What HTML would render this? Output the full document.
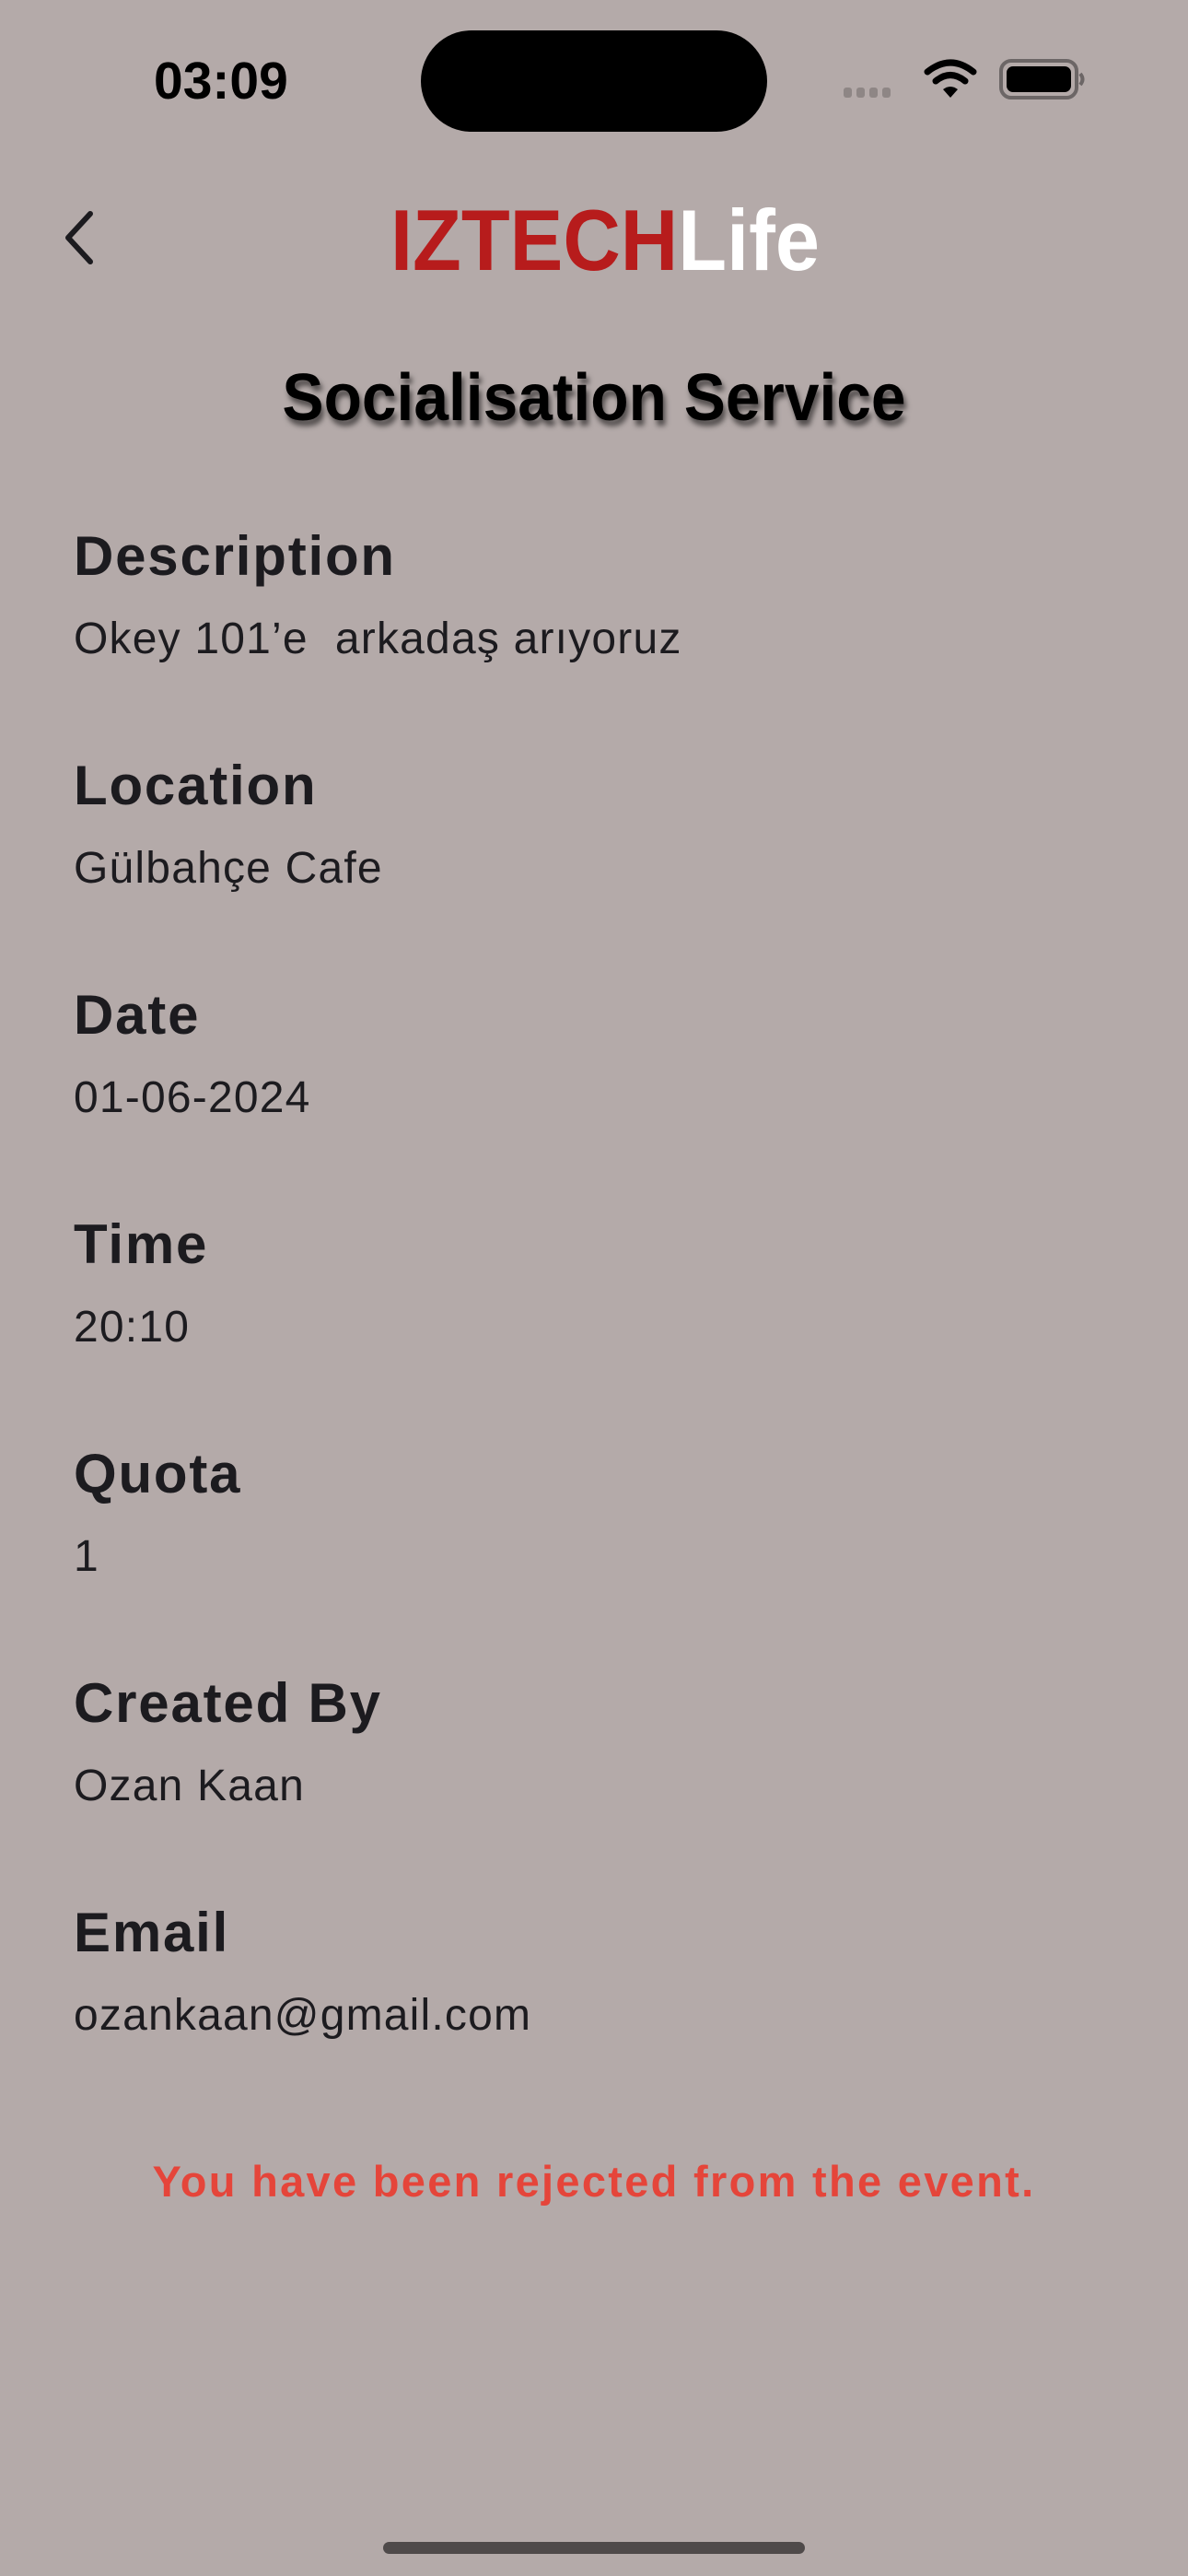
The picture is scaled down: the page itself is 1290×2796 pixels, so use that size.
<!DOCTYPE html>
<html><head><meta charset="utf-8"><style>
html,body{margin:0;padding:0}
body{width:1290px;height:2796px;background:#b4aaa9;position:relative;overflow:hidden;font-family:"Liberation Sans",sans-serif;color:#1c1b1f}
.a{position:absolute;line-height:1;white-space:pre}
.l{left:80px;font-size:60px;font-weight:bold;letter-spacing:1.8px}
.v{left:80px;font-size:48px;letter-spacing:1.2px}
</style></head><body>
<div class="a" style="left:167px;top:60px;font-size:57px;font-weight:bold;color:#000">03:09</div>
<div style="position:absolute;left:457px;top:33px;width:376px;height:110px;border-radius:55px;background:#000"></div>
<svg style="position:absolute;left:910px;top:60px" width="270" height="52" viewBox="0 0 270 52">
<g fill="#8e8685"><rect x="6" y="35" width="9" height="11" rx="3"/><rect x="20" y="35" width="9" height="11" rx="3"/><rect x="34" y="35" width="9" height="11" rx="3"/><rect x="48" y="35" width="9" height="11" rx="3"/></g>
<g fill="none" stroke="#000" stroke-width="7" stroke-linecap="round"><path d="M97 18 Q122 -2 147 18"/><path d="M106 28 Q122 15 138 28"/></g>
<path d="M114 37 Q122 31 130 37 L122 46 Z" fill="#000"/>
<rect x="177" y="6" width="82" height="40" rx="11" fill="none" stroke="#6c6666" stroke-width="4"/>
<rect x="183" y="12" width="70" height="28" rx="7" fill="#000"/>
<path d="M263 20 Q268 26 263 32" fill="none" stroke="#6c6666" stroke-width="4"/>
</svg>
<svg style="position:absolute;left:62px;top:226px" width="46" height="64" viewBox="0 0 46 64"><path d="M36 6 L12 32 L36 58" fill="none" stroke="#1c1b1f" stroke-width="6" stroke-linecap="round" stroke-linejoin="round"/></svg>
<div class="a" style="left:424px;top:214px;font-size:94px;font-weight:bold;letter-spacing:0px;transform:scaleX(0.92);transform-origin:0 0"><span style="color:#b71c1c">IZTECH</span><span style="color:#fff">Life</span></div>
<div class="a" style="left:0;width:1290px;text-align:center;top:396px;font-size:72px;font-weight:bold;color:#000;text-shadow:3px 6px 6px rgba(0,0,0,0.55);transform:scaleX(0.94);transform-origin:645px 0">Socialisation Service</div>

<div class="a l" style="top:574px">Description</div>
<div class="a v" style="top:670px">Okey 101’e  arkadaş arıyoruz</div>
<div class="a l" style="top:823px">Location</div>
<div class="a v" style="top:919px">Gülbahçe Cafe</div>
<div class="a l" style="top:1072px">Date</div>
<div class="a v" style="top:1168px">01-06-2024</div>
<div class="a l" style="top:1321px">Time</div>
<div class="a v" style="top:1417px">20:10</div>
<div class="a l" style="top:1570px">Quota</div>
<div class="a v" style="top:1666px">1</div>
<div class="a l" style="top:1819px">Created By</div>
<div class="a v" style="top:1915px">Ozan Kaan</div>
<div class="a l" style="top:2068px">Email</div>
<div class="a v" style="top:2164px">ozankaan@gmail.com</div>

<div class="a" style="left:0;width:1290px;text-align:center;top:2344px;font-size:47px;font-weight:bold;color:#e5453a;letter-spacing:2.3px">You have been rejected from the event.</div>
<div style="position:absolute;left:416px;top:2759px;width:458px;height:13px;border-radius:7px;background:#4f4a4a"></div>
</body></html>
